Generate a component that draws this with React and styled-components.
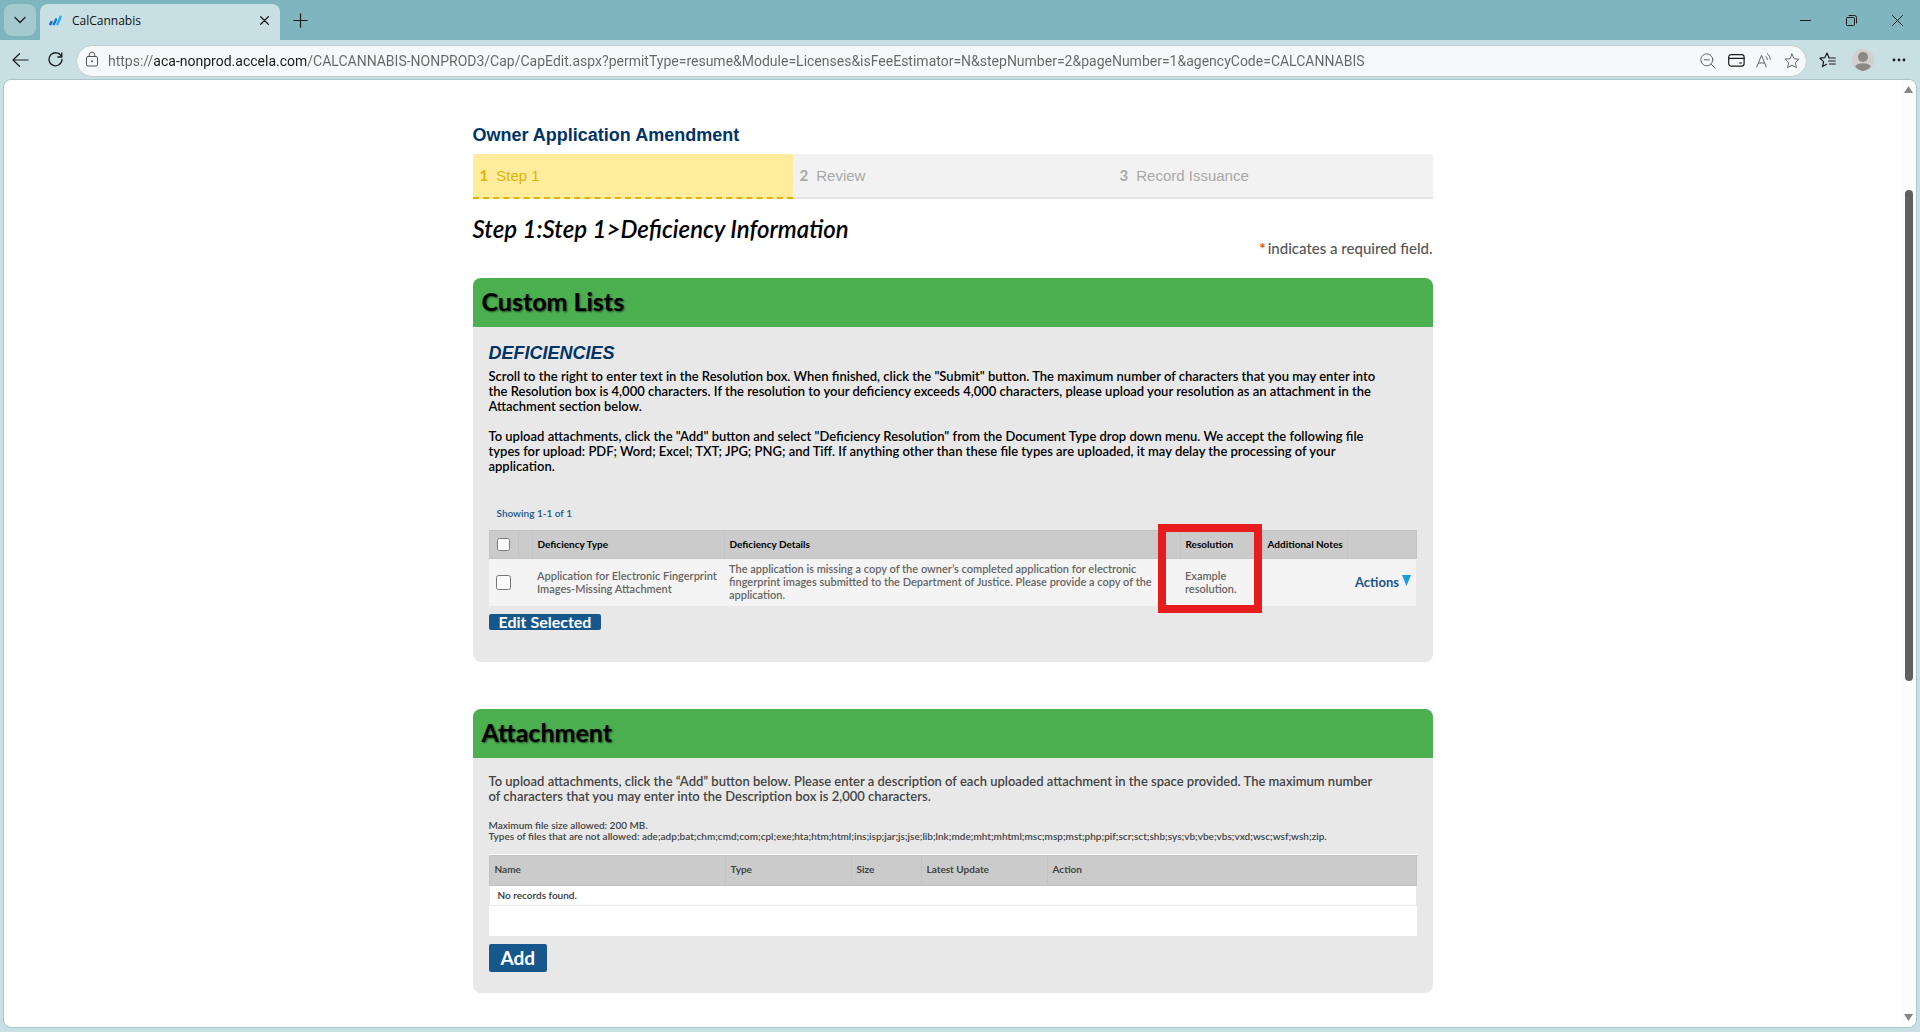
import React from 'react'
import styled, { createGlobalStyle } from 'styled-components'

const museo = `Lato, 'Noto Sans', sans-serif`
const arial = `'Liberation Sans', Arial, sans-serif`
const segoe = `'Open Sans', 'Noto Sans', sans-serif`

const GlobalStyle = createGlobalStyle`
  * {
    box-sizing: border-box;
  }
  body {
    margin: 0;
    background: #c8dfe3;
    font-family: ${museo};
  }
  h1, h2, h3, p {
    margin: 0;
  }
  button {
    font-family: inherit;
    cursor: pointer;
  }
`

const Browser = styled.div`
  display: flex;
  flex-direction: column;
  min-height: 100vh;
`

/* browser chrome */

const TabBar = styled.div`
  display: flex;
  align-items: center;
  height: 40px;
  padding-left: 4px;
  background: #7fb5be;
`

const IconButton = styled.button`
  display: flex;
  align-items: center;
  justify-content: center;
  flex: none;
  width: ${({ $width }) => $width || 32}px;
  height: 32px;
  padding: 0;
  border: 0;
  border-radius: 8px;
  color: ${({ $color }) => $color || '#1c1c1c'};
  background: ${({ $background }) => $background || 'none'};
`

const Tab = styled.div`
  display: flex;
  align-items: center;
  align-self: flex-end;
  width: 240px;
  height: 36px;
  margin: 0 4px;
  padding: 0 0 3px 9px;
  border-radius: 8px 8px 0 0;
  background: #c8dfe3;
  color: #111;
  font: 12px/16px ${segoe};
`

const TabTitle = styled.span`
  flex: 1;
  padding-left: 10px;
`

const WindowControls = styled.div`
  display: flex;
  margin-left: auto;
`

const Toolbar = styled.div`
  display: flex;
  align-items: center;
  height: 39px;
  padding: 0 4px 0 3px;
  background: #c8dfe3;
`

const AddressBar = styled.form`
  display: flex;
  align-items: center;
  flex: 1;
  height: 32px;
  margin: 2px 3px 0 3px;
  padding-left: 4px;
  border: 1px solid #c3cbcd;
  border-radius: 16px;
  background: #f5f9fa;
`

/* the host part of the address is darker than the rest */
const Address = styled.input`
  flex: 1;
  min-width: 0;
  height: 24px;
  padding: 0;
  margin-left: 5px;
  border: 0;
  outline: 0;
  color: transparent;
  background: linear-gradient(90deg, #666 46px, #1a1a1a 46px, #1a1a1a 198px, #666 198px);
  background-clip: text;
  font: 14px/24px Roboto, sans-serif;
`

const Viewport = styled.div`
  display: flex;
  flex: 1;
  margin: 0 3px 4px;
  border: 1px solid #a9c6cb;
  border-radius: 8px;
  background: #fff;
`

const Scrollbar = styled.div`
  display: flex;
  flex-direction: column;
  align-items: center;
  flex: none;
  width: 15px;
  padding: 6px 0;
  border-radius: 0 8px 8px 0;
  background: #fcfcfc;
`

const ScrollTrack = styled.div`
  display: flex;
  flex-direction: column;
  flex: 1;
  width: 8px;
  margin: 4px 0;
`

const ScrollGap = styled.div`
  flex: ${({ $grow }) => $grow};
`

const ScrollThumb = styled.div`
  flex: 491;
  border-radius: 4px;
  background: #606060;
`

/* page */

const Page = styled.main`
  flex: 1;
  padding: 44px 16px 32px;
`

const Content = styled.div`
  max-width: 960px;
  margin: 0 auto;
`

const PageTitle = styled.h1`
  padding-bottom: 8px;
  color: #003366;
  font: bold 18px/22px ${arial};
`

const Steps = styled.ol`
  display: grid;
  grid-template-columns: repeat(3, 1fr);
  margin: 0;
  padding: 0;
  list-style: none;
`

const Step = styled.li`
  display: flex;
  align-items: center;
  gap: 8px;
  height: 45px;
  padding-left: 7px;
  border-bottom: 2px ${({ $active }) => ($active ? 'dashed #deb406' : 'solid #e2e2e2')};
  background: ${({ $active }) => ($active ? '#ffec9c' : '#f2f2f2')};
  color: ${({ $active }) => ($active ? '#deb406' : '#a8a8a8')};
  font: 15px/20px ${arial};

  b {
    padding-bottom: 2px;
    font: bold 15px/20px ${museo};
  }
`

const StepHeading = styled.h2`
  padding-top: 17px;
  color: #000;
  font: italic 600 24px/26px ${museo};
`

const Required = styled.p`
  padding: 0 0 24px;
  color: #555;
  text-align: right;
  font: 500 15px/12px ${museo};

  span {
    margin-right: 2px;
    color: #cc5500;
    font-weight: bold;
  }
`

const Card = styled.section`
  border-radius: 8px;
  background: #e8e8e8;

  & + & {
    margin-top: 47px;
  }
`

const CardTitle = styled.h2`
  height: 49px;
  padding-left: 9px;
  border-radius: 8px 8px 0 0;
  background: #4cb050;
  color: #000;
  text-shadow: 1px 1px 2px rgba(0, 0, 0, 0.6);
  font: bold 25px/46px ${museo};
`

const CardBody = styled.div`
  padding: 16px 16px ${({ $bottom }) => $bottom}px;
`

const ListTitle = styled.h3`
  padding-bottom: 6px;
  color: #003366;
  font: italic bold 18px/20px ${arial};
`

const Text = styled.p`
  color: ${({ $color }) => $color || '#000'};
  font: 600 13px/15px ${museo};
  padding-bottom: 15px;
`

const SmallText = styled.p`
  padding: 1px 0 12px;
  color: #444;
  font: 600 10px/11px ${museo};
`

const Showing = styled.p`
  padding: 18px 8px 10px;
  color: #1a5689;
  font: 600 10px/13px ${museo};
`

const TableArea = styled.div`
  position: relative;
`

const Table = styled.table`
  width: 100%;
  table-layout: fixed;
  border-collapse: collapse;
  text-align: left;

  th {
    padding: 0 5px;
    border: 1px solid #c3c3c3;
    background: #cbcbcb;
    font: bold 10px/13px ${museo};
    white-space: nowrap;
  }
`

const DeficiencyTable = styled(Table)`
  color: #000;

  th {
    height: 28px;
  }
  td {
    height: 47px;
    padding: 3px 0 5px 5px;
    background: #f4f4f4;
    color: #666;
    font: 600 11px/13px ${museo};
  }
  td:last-child {
    padding-left: 8px;
  }
  th:first-child,
  td:first-child {
    padding: 0 0 0 7px;
  }
`

const Checkbox = styled.input`
  display: block;
  width: ${({ $size }) => $size}px;
  height: ${({ $size }) => $size}px;
  margin: 0;
`

const ActionsButton = styled.button`
  display: flex;
  align-items: flex-start;
  gap: 3px;
  padding: 0;
  border: 0;
  background: none;
  color: #1a5689;
  font-size: 13px;
  font-weight: bold;
  line-height: 16px;
`

const Highlight = styled.div`
  position: absolute;
  top: -6px;
  right: 155px;
  width: 104px;
  height: 89px;
  border: 8px solid #e71c1c;
  pointer-events: none;
`

const PrimaryButton = styled.button`
  display: block;
  height: ${({ $large }) => ($large ? 28 : 16)}px;
  margin-top: 8px;
  padding: 0 ${({ $large }) => ($large ? 12 : 10)}px;
  border: 0;
  border-radius: 2px;
  background: #17588c;
  color: #fff;
  font-size: ${({ $large }) => ($large ? 19 : 16)}px;
  font-weight: bold;
  line-height: ${({ $large }) => ($large ? 26 : 14)}px;
`

const FilesArea = styled.div`
  padding: 1px 0 30px;
  background: #fff;
`

const FileTable = styled(Table)`
  color: #444;

  th {
    height: 30px;
    padding-bottom: 3px;
  }
  td {
    height: 20px;
    padding: 0 8px;
    border: 1px solid #e8e8e8;
    color: #333;
    font: 600 10px/13px ${museo};
  }
`

const stroke = { fill: 'none', stroke: 'currentColor', strokeLinecap: 'round', strokeLinejoin: 'round' }

function AccelaLogo() {
  return (
    <svg width="13" height="11" viewBox="0 0 13 11" fill="none" strokeWidth="2.4" strokeLinecap="round">
      <path d="M1.4 9.2l1-2.2" stroke="#1565c0" />
      <path d="M4.8 9.2l2.2-4.8" stroke="#1976d2" />
      <path d="M8.4 9.2l3.2-7.4" stroke="#1fb0f5" />
    </svg>
  )
}

function LockIcon() {
  return (
    <svg width="22" height="20" viewBox="0 0 22 20" {...stroke}>
      <rect x="5.5" y="5.5" width="11" height="9.5" rx="1.5" />
      <path d="M8.2 5.5V4a2.8 2.8 0 0 1 5.6 0v1.5" />
      <circle cx="11" cy="10.3" r="0.6" fill="currentColor" />
    </svg>
  )
}

const starPath = 'M8 1l2.1 4.6 5 .6-3.7 3.4 1 5L8 12.1l-4.4 2.5 1-5L.9 6.2l5-.6z'

const deficiencyColumns = [29, 14, 192, null, 82, 85, 69]
const fileColumns = [236, 126, 70, 126, null]

function Columns({ widths }) {
  return (
    <colgroup>
      {widths.map((width, index) => (
        <col key={index} style={width ? { width } : undefined} />
      ))}
    </colgroup>
  )
}

function BrowserTabs() {
  return (
    <TabBar>
      <IconButton $background="#a4cad0" aria-label="Tab actions">
        <svg width="12" height="8" viewBox="0 0 12 8" {...stroke} strokeWidth="1.3">
          <path d="M1 1.5l5 5 5-5" />
        </svg>
      </IconButton>
      <Tab>
        <AccelaLogo />
        <TabTitle>CalCannabis</TabTitle>
        <IconButton aria-label="Close tab">
          <svg width="9" height="9" viewBox="0 0 9 9" {...stroke} strokeWidth="1.3">
            <path d="M.7.7l7.6 7.6M8.3.7L.7 8.3" />
          </svg>
        </IconButton>
      </Tab>
      <IconButton aria-label="New tab">
        <svg width="15" height="15" viewBox="0 0 15 15" {...stroke} strokeWidth="1.2">
          <path d="M7.5.8v13.4M.8 7.5h13.4" />
        </svg>
      </IconButton>
      <WindowControls>
        <IconButton $width={46} aria-label="Minimize">
          <svg width="11" height="11" viewBox="0 0 11 11" {...stroke}>
            <path d="M.5 5.5h10" />
          </svg>
        </IconButton>
        <IconButton $width={46} aria-label="Restore">
          <svg width="11" height="11" viewBox="0 0 11 11" {...stroke}>
            <rect x=".5" y="2.5" width="8" height="8" rx="1" />
            <path d="M3 .5h5.5a2 2 0 0 1 2 2V8" />
          </svg>
        </IconButton>
        <IconButton $width={46} aria-label="Close">
          <svg width="11" height="11" viewBox="0 0 11 11" {...stroke}>
            <path d="M.5.5l10 10M10.5.5l-10 10" />
          </svg>
        </IconButton>
      </WindowControls>
    </TabBar>
  )
}

function BrowserToolbar() {
  return (
    <Toolbar>
      <IconButton $width={34} aria-label="Back">
        <svg width="17" height="14" viewBox="0 0 17 14" {...stroke} strokeWidth="1.2">
          <path d="M16 7H1M7.5.7L1 7l6.5 6.3" />
        </svg>
      </IconButton>
      <IconButton $width={36} aria-label="Refresh">
        <svg width="15" height="15" viewBox="0 0 15 15" {...stroke} strokeWidth="1.3">
          <path d="M13.6 5A6.5 6.5 0 1 0 14 7.5M13.8 1v4h-4" />
        </svg>
      </IconButton>
      <AddressBar>
        <IconButton as="span" $width={22} $color="#555">
          <LockIcon />
        </IconButton>
        <Address
          aria-label="Address"
          type="text"
          defaultValue="https://aca-nonprod.accela.com/CALCANNABIS-NONPROD3/Cap/CapEdit.aspx?permitType=resume&Module=Licenses&isFeeEstimator=N&stepNumber=2&pageNumber=1&agencyCode=CALCANNABIS"
        />
        <IconButton type="button" $width={28} $color="#666" aria-label="Zoom out">
          <svg width="16" height="16" viewBox="0 0 16 16" {...stroke}>
            <circle cx="6.8" cy="6.8" r="6" />
            <path d="M4.3 6.8h5M11.2 11.2l4 4" />
          </svg>
        </IconButton>
        <IconButton type="button" $width={28} aria-label="Saved cards">
          <svg width="17" height="13" viewBox="0 0 17 13" {...stroke} strokeWidth="1.2">
            <rect x=".7" y=".7" width="15.4" height="11.4" rx="2.4" />
            <path d="M.7 4.4h15.4M11.5 9h2" />
          </svg>
        </IconButton>
        <IconButton type="button" $width={28} $color="#666" aria-label="Read aloud">
          <svg width="16" height="15" viewBox="0 0 16 15" {...stroke}>
            <path d="M.8 14L5.5 2.2 10.2 14M2.5 10h6M10 3.6c.9.8 1.3 1.8 1.3 3M11.4.8c1.8 1.4 2.8 3.3 2.8 5.6" />
          </svg>
        </IconButton>
        <IconButton type="button" $width={28} $color="#666" aria-label="Add to favorites">
          <svg width="16" height="16" viewBox="0 0 16 16" {...stroke}>
            <path d={starPath} />
          </svg>
        </IconButton>
      </AddressBar>
      <IconButton $width={34} aria-label="Favorites">
        <svg width="17" height="16" viewBox="0 0 17 16" {...stroke} strokeWidth="1.2">
          <path d="M9.6 5.6H10L8 1 5.9 5.6l-5 .6 3.7 3.4-1 5L7.5 12.3M10.5 6h5.8M9.5 9h6.8M10.5 12h5.8" />
        </svg>
      </IconButton>
      <IconButton $width={38} aria-label="Profile">
        <svg width="22" height="22" viewBox="0 0 22 22">
          <circle cx="11" cy="11" r="11" fill="#d2cfcc" />
          <circle cx="11" cy="8" r="5" fill="#8c8885" />
          <path d="M3.2 17.5c1.2-2.3 4.2-3.3 7.8-3.3s6.6 1 7.8 3.3A11 11 0 0 1 11 22a11 11 0 0 1-7.8-4.5z" fill="#8c8885" />
        </svg>
      </IconButton>
      <IconButton $width={34} aria-label="Settings and more">
        <svg width="14" height="4" viewBox="0 0 14 4" fill="currentColor">
          <circle cx="2" cy="2" r="1.4" />
          <circle cx="7" cy="2" r="1.4" />
          <circle cx="12" cy="2" r="1.4" />
        </svg>
      </IconButton>
    </Toolbar>
  )
}

function CustomLists() {
  return (
    <Card>
      <CardTitle>Custom Lists</CardTitle>
      <CardBody $bottom={32}>
        <ListTitle>DEFICIENCIES</ListTitle>
        <Text>
          Scroll to the right to enter text in the Resolution box. When finished, click the "Submit" button. The maximum number of characters that you may enter into
          <br />
          the Resolution box is 4,000 characters. If the resolution to your deficiency exceeds 4,000 characters, please upload your resolution as an attachment in the
          <br />
          Attachment section below.
        </Text>
        <Text>
          To upload attachments, click the "Add" button and select "Deficiency Resolution" from the Document Type drop down menu. We accept the following file
          <br />
          types for upload: PDF; Word; Excel; TXT; JPG; PNG; and Tiff. If anything other than these file types are uploaded, it may delay the processing of your
          <br />
          application.
        </Text>
        <Showing>Showing 1-1 of 1</Showing>
        <TableArea>
          <DeficiencyTable>
            <Columns widths={deficiencyColumns} />
            <thead>
              <tr>
                <th><Checkbox type="checkbox" $size={13} aria-label="Select all" /></th>
                <th></th>
                <th>Deficiency Type</th>
                <th>Deficiency Details</th>
                <th>Resolution</th>
                <th>Additional Notes</th>
                <th></th>
              </tr>
            </thead>
            <tbody>
              <tr>
                <td><Checkbox type="checkbox" $size={15} aria-label="Select row" /></td>
                <td></td>
                <td>
                  Application for Electronic Fingerprint
                  <br />
                  Images-Missing Attachment
                </td>
                <td>
                  The application is missing a copy of the owner’s completed application for electronic
                  <br />
                  fingerprint images submitted to the Department of Justice. Please provide a copy of the
                  <br />
                  application.
                </td>
                <td>Example resolution.</td>
                <td></td>
                <td>
                  <ActionsButton>
                    Actions
                    <svg width="9" height="12" viewBox="0 0 9 12">
                      <path d="M0 1h9L4.5 12z" fill="#1c9de0" />
                    </svg>
                  </ActionsButton>
                </td>
              </tr>
            </tbody>
          </DeficiencyTable>
          <Highlight />
        </TableArea>
        <PrimaryButton>Edit Selected</PrimaryButton>
      </CardBody>
    </Card>
  )
}

function Attachment() {
  return (
    <Card>
      <CardTitle>Attachment</CardTitle>
      <CardBody $bottom={21}>
        <Text $color="#444">
          To upload attachments, click the “Add” button below. Please enter a description of each uploaded attachment in the space provided. The maximum number
          <br />
          of characters that you may enter into the Description box is 2,000 characters.
        </Text>
        <SmallText>
          Maximum file size allowed: 200 MB.
          <br />
          Types of files that are not allowed: ade;adp;bat;chm;cmd;com;cpl;exe;hta;htm;html;ins;isp;jar;js;jse;lib;lnk;mde;mht;mhtml;msc;msp;mst;php;pif;scr;sct;shb;sys;vb;vbe;vbs;vxd;wsc;wsf;wsh;zip.
        </SmallText>
        <FilesArea>
          <FileTable>
            <Columns widths={fileColumns} />
            <thead>
              <tr>
                <th>Name</th>
                <th>Type</th>
                <th>Size</th>
                <th>Latest Update</th>
                <th>Action</th>
              </tr>
            </thead>
            <tbody>
              <tr>
                <td colSpan="5">No records found.</td>
              </tr>
            </tbody>
          </FileTable>
        </FilesArea>
        <PrimaryButton $large>Add</PrimaryButton>
      </CardBody>
    </Card>
  )
}

export default function App() {
  return (
    <Browser>
      <GlobalStyle />
      <BrowserTabs />
      <BrowserToolbar />
      <Viewport>
        <Page>
          <Content>
            <PageTitle>Owner Application Amendment</PageTitle>
            <Steps>
              <Step $active><b>1</b>Step 1</Step>
              <Step><b>2</b>Review</Step>
              <Step><b>3</b>Record Issuance</Step>
            </Steps>
            <StepHeading>Step 1:Step 1&gt;Deficiency Information</StepHeading>
            <Required><span>*</span>indicates a required field.</Required>
            <CustomLists />
            <Attachment />
          </Content>
        </Page>
        <Scrollbar>
          <svg width="9" height="7" viewBox="0 0 9 7"><path d="M4.5 0L9 7H0z" fill="#858585" /></svg>
          <ScrollTrack>
            <ScrollGap $grow={93} />
            <ScrollThumb />
            <ScrollGap $grow={329} />
          </ScrollTrack>
          <svg width="9" height="7" viewBox="0 0 9 7"><path d="M4.5 7L9 0H0z" fill="#858585" /></svg>
        </Scrollbar>
      </Viewport>
    </Browser>
  )
}
